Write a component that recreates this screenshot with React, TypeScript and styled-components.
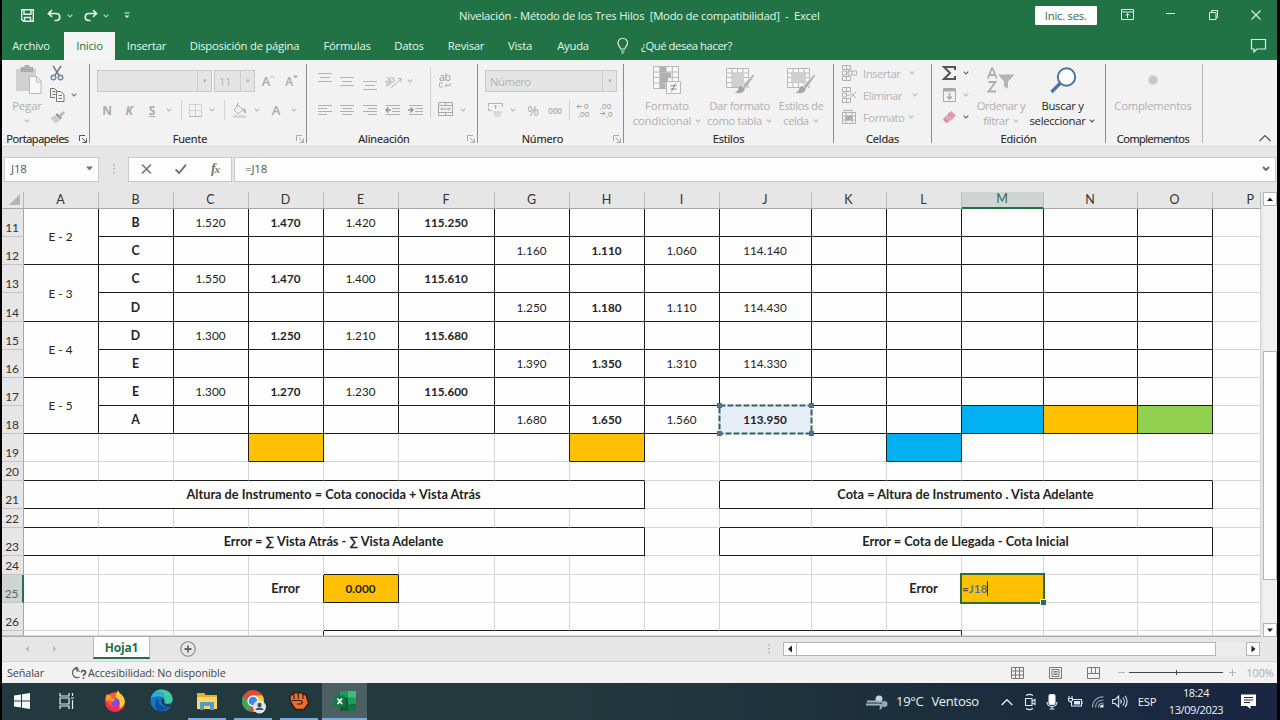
import { FC, ReactNode } from 'react'
import styled, { createGlobalStyle, css } from 'styled-components'

const GlobalStyle = createGlobalStyle`
  * { box-sizing: border-box; }
  body {
    margin: 0;
    background: #000;
    overflow: hidden;
  }
  svg { display: block; flex: none; overflow: visible; }
`

const Screen = styled.div`
  width: 1280px;
  height: 720px;
  padding: 0 3px 0 2px;
  display: flex;
  flex-direction: column;
  background: #000;
  color: #262626;
  font-family: 'Open Sans', 'Noto Sans', sans-serif;
  font-size: 11.3px;
  line-height: 15px;
  letter-spacing: -0.2px;
  white-space: nowrap;
`

/* ---------- shared bits ---------- */

type IconProps = {
  w?: number
  h?: number
  color?: string
  sw?: number
  children: ReactNode
}

const Icon: FC<IconProps> = ({ w = 16, h = 16, color = '#b4b4b4', sw = 1, children }) => (
  <svg width={w} height={h} viewBox={`0 0 ${w} ${h}`} fill='none' stroke={color} strokeWidth={sw}>
    {children}
  </svg>
)

const Chevron: FC<{ color?: string }> = ({ color = '#bcbcbc' }) => (
  <Icon w={6} h={4} color={color} sw={1.1}><path d='M.7 .7 3 3 5.3 .7' /></Icon>
)

// fixed width place for one control, content centered
const Slot = styled.div<{ w: number; ml?: number; drop?: number }>`
  width: ${({ w }) => w}px;
  margin-left: ${({ ml }) => ml ?? 0}px;
  padding-top: ${({ drop }) => Math.max(drop ?? 0, 0)}px;
  padding-bottom: ${({ drop }) => Math.max(-(drop ?? 0), 0)}px;
  flex: none;
  display: flex;
  align-items: center;
  justify-content: center;
`

/* ---------- title bar and tabs ---------- */

const TitleBar = styled.header`
  height: 32px;
  flex: none;
  display: flex;
  align-items: center;
  padding-bottom: 1px;
  background: #217346;
  color: #e2f7ea;
`

const DocTitle = styled.div`
  width: 361px;
  margin-left: 327px;
  letter-spacing: -0.23px;
  white-space: pre;
`

const SignIn = styled.button`
  width: 63px;
  height: 19px;
  margin: 0 0 0 215px;
  padding: 0;
  border: 0;
  border-radius: 1px;
  background: #fff;
  color: #2b6a48;
  font: inherit;
  letter-spacing: -0.25px;
`

const TabBar = styled.nav`
  height: 28px;
  flex: none;
  display: flex;
  background: #217346;
  color: #e2f7ea;
`

const RibbonTab = styled.div<{ w: number; $active?: boolean }>`
  width: ${({ w }) => w}px;
  flex: none;
  display: flex;
  align-items: center;
  justify-content: center;
  padding-bottom: 1px;
  letter-spacing: -0.25px;
  ${({ $active }) => $active && css`
    background: #f3f5f4;
    color: #217346;
  `}
`

const TellMe = styled.div`
  display: flex;
  align-items: center;
  gap: 12px;
  margin-left: 14px;
  padding-bottom: 1px;
  width: 640px;
  letter-spacing: -0.45px;
`

/* ---------- ribbon ---------- */

const Ribbon = styled.section`
  height: 87px;
  flex: none;
  display: flex;
  background: #f2f2f2;
  border-bottom: 1px solid #d8d8d8;
`

const Divider = styled.div<{ light?: boolean }>`
  width: 1px;
  height: 79px;
  margin-top: 4px;
  flex: none;
  background: ${({ light }) => (light ? '#b5b5b5' : '#8c8c8c')};
`

const Group = styled.div<{ w: number }>`
  width: ${({ w }) => w}px;
  flex: none;
  display: grid;
  grid-template-rows: 71px 15px;
`

const GroupBody = styled.div<{ top?: number; column?: boolean }>`
  display: flex;
  flex-direction: ${({ column }) => (column ? 'column' : 'row')};
  padding-top: ${({ top }) => top ?? 2}px;
  color: #b5b5b5;
`

const GroupLabel = styled.div<{ shift?: number; ls?: number }>`
  display: grid;
  grid-template-columns: 12px 1fr 12px;
  align-items: center;
  justify-items: center;
  color: #222;
  font-size: 11px;
  letter-spacing: ${({ ls }) => ls ?? -0.15}px;
  -webkit-text-stroke: 0.15px #222;

  span {
    grid-column: 2;
    margin-left: ${({ shift }) => shift ?? 0}px;
  }
`

const Column = styled.div<{ w: number; ml?: number }>`
  width: ${({ w }) => w}px;
  margin-left: ${({ ml }) => ml ?? 0}px;
  flex: none;
`

const Row = styled.div<{ h?: number }>`
  height: ${({ h }) => h ?? 22}px;
  display: flex;
  align-items: center;
`

const BigButton = styled.div<{ w: number; dark?: boolean; ls?: number }>`
  width: ${({ w }) => w}px;
  flex: none;
  display: grid;
  grid-template-rows: 36px 15px 15px;
  justify-items: center;
  align-items: center;
  color: ${({ dark }) => (dark ? '#262626' : '#b0b0b0')};
  letter-spacing: ${({ ls }) => ls ?? 0}px;

  span {
    display: flex;
    align-items: center;
    gap: 4px;
  }
`

const Select = styled.div<{ w: number }>`
  width: ${({ w }) => w}px;
  height: 22px;
  flex: none;
  display: flex;
  align-items: center;
  padding-left: 4px;
  border: 1px solid #c9c9c9;
  background: #e4e4e4;
  color: #b5b5b5;
  letter-spacing: -0.5px;

  &::after {
    content: '▾';
    width: 13px;
    height: 20px;
    margin-left: auto;
    border-left: 1px solid #cdcdcd;
    font: 7px/20px 'DejaVu Sans', sans-serif;
    text-align: center;
  }
`

const Rule = styled.div<{ h?: number; ml: number }>`
  width: 1px;
  height: ${({ h }) => h ?? 20}px;
  margin-left: ${({ ml }) => ml}px;
  flex: none;
  background: #d4d4d4;
`

const Glyph = styled.span<{ size?: number; $italic?: boolean; $underline?: boolean; weight?: number }>`
  font-size: ${({ size }) => size ?? 12}px;
  font-weight: ${({ weight }) => weight ?? 700};
  font-style: ${({ $italic }) => ($italic ? 'italic' : 'normal')};
  text-decoration: ${({ $underline }) => ($underline ? 'underline' : 'none')};
  color: #ababab;
`

const Launcher: FC<{ color?: string }> = ({ color = '#aaa' }) => (
  <Icon w={8} h={8} color={color}><path d='M.5 6V.5H6M3 3l4 4M7.500 3.500v4h-4' /></Icon>
)

const Lines: FC<{ rows: [number, number][]; arrow?: 'in' | 'out' }> = ({ rows, arrow }) => (
  <Icon w={16} h={rows.length * 3} color='#b0b0b0'>
    {rows.map(([from, to], i) => <path key={i} d={`M${from} ${i * 3 + 1}.5H${to}`} />)}
    {arrow === 'out' && <path d='M6 6H1M3.500 3.500 1 6l2.500 2.500' strokeWidth='1.500' stroke='#999' />}
    {arrow === 'in' && <path d='M0 6h5M2.500 3.500 5 6 2.500 8.500' strokeWidth='1.500' stroke='#999' />}
  </Icon>
)

const TableIcon: FC<{ kind: 'cond' | 'table' | 'cell' }> = ({ kind }) => (
  <Icon w={28} h={30} color='#b8b8b8'>
    <path
      d={kind === 'cond'
        ? 'M.5 1.500h25v22H.5zM.5 7h25M.5 12.500h25M.5 18h25M6.800 1.500v22M13 1.500v22M19.300 1.500v22'
        : 'M.5 3.500h22v19H.5zM.5 8h22M.5 12.500h22M.5 17.500h22M6 3.500v19M11.500 3.500v19M17 3.500v19'}
      fill='#f8f8f8'
    />
    {kind === 'cond' && (
      <>
        <path d='M7 2h6v5H7zM7 7.500h11v5H7zM7 13h8v5H7zM7 18.500h5v5H7z' fill='#b0b0b0' stroke='none' />
        <path d='M13.500 16.500h14v12h-14z' fill='#f6f6f6' />
        <path d='M17.500 20.800h6M17.500 24h6M22.500 18.500l-4 8' stroke='#8a8a8a' />
      </>
    )}
    {kind !== 'cond' && (
      <>
        <path d={kind === 'table' ? 'M6 8h12v14H6z' : 'M4 7h15v11H4z'} fill='#cfcfcf' stroke='none' />
        <path d='M27.500 8.500 16 21l3.500 3L28.500 11z' fill='#b4b4b4' stroke='#f4f4f4' />
        <path d='M15.500 21c-3 .2-3 3-4 4.500-.8 1.200-2 1.500-3 1.700 3.500 2 9 1.500 10.500-3.200z' fill='#a5a5a5' stroke='none' />
      </>
    )}
  </Icon>
)

const CellsIcon: FC<{ kind: 'insert' | 'delete' | 'format' }> = ({ kind }) => (
  <Icon w={16} h={16} color='#b2b2b2'>
    {kind === 'format' ? (
      <>
        <path d='M1.500 3.500h13v11h-13zM1.500 7h13M1.500 11h13M5 3.500v11M11 3.500v11M3 .5v2M3 1.500h8M11 .5v2' />
        <path d='M5 7h6v4H5z' fill='#aaa' />
      </>
    ) : (
      <>
        <path d='M1.500 .5h8v4h-8zM5.500 .5v4M1.500 11.500h8v4h-8zM5.500 11.500v4M1.500 6h4v4h-4z' />
        {kind === 'insert' ? <path d='M7 6h8.500v4H7zM11 6v4M10 3 7 8' /> : <path d='m9 5 6 6M15 5l-6 6M6 8h4' />}
      </>
    )}
  </Icon>
)

const ClipboardGroup: FC = () => (
  <Group w={87}>
    <GroupBody>
      <Column w={42} ml={4}>
        <BigButton w={42} ls={-0.1}>
          <Icon w={24} h={30} color='#b8b8b8'>
            <path d='M1 4h20v22H1z' fill='#d0d0d0' stroke='none' />
            <path d='M6 4.500h11M6 2.500h4V.5h4v2h4v4H6z' fill='#b4b4b4' stroke='#a8a8a8' />
            <path d='M14.500 11.500h7l4.500 5v12H14.500z' fill='#f7f7f7' />
            <path d='M21.500 12v5h5' />
          </Icon>
          <span>Pegar</span>
          <Chevron />
        </BigButton>
      </Column>
      <Column w={36}>
        <Row>
          <Slot w={18}>
            <Icon w={14} h={16} color='#6f7780' sw={1.4}>
              <path d='M3 1l6.500 10M11 1 4.500 11' />
              <circle cx='3.500' cy='12.500' r='2.300' stroke='#6f8ba8' /><circle cx='10.500' cy='12.500' r='2.300' stroke='#6f8ba8' />
            </Icon>
          </Slot>
        </Row>
        <Row>
          <Slot w={18}>
            <Icon w={15} h={14} color='#767676'>
              <path d='M5 9.500H.5v-9h4l3 3M2.500 3.500h3M2.500 6.500h3' />
              <path d='M6.500 3.500h4l3.500 3v7H6.500zM8.500 7.500h3.500M8.500 10.500h3.500' fill='#f8f8f8' />
            </Icon>
          </Slot>
          <Slot w={16}><Chevron color='#777' /></Slot>
        </Row>
        <Row>
          <Slot w={18}>
            <Icon w={15} h={14} color='#aaa'>
              <path d='m9 5 4-4 2 2-4 4z' fill='#bbb' stroke='none' />
              <path d='m7 3 5 5-2 1.500L5.500 5z' fill='#999' stroke='none' />
              <path d='m5 5.500 5 4.500-4 3.500L0 8z' fill='#cbcbcb' stroke='none' />
            </Icon>
          </Slot>
        </Row>
      </Column>
    </GroupBody>
    <GroupLabel shift={-16} ls={-0.45}><span>Portapapeles</span><Launcher color='#555' /></GroupLabel>
  </Group>
)

const FontGroup: FC = () => (
  <Group w={216}>
    <GroupBody top={7} column>
      <Row h={28}>
        <Slot w={7} />
        <Select w={115} />
        <Slot w={2} />
        <Select w={41}>11</Select>
        <Slot w={27}><Glyph size={13} weight={600}>A</Glyph><Icon w={5} h={12}><path d='M.5 3 2.500 1l2 2' /></Icon></Slot>
        <Slot w={19}><Glyph size={12} weight={600}>A</Glyph><Icon w={5} h={12}><path d='M.5 1h4l-2 2z' fill='#aaa' /></Icon></Slot>
      </Row>
      <Row h={30}>
        <Slot w={22} ml={6}><Glyph>N</Glyph></Slot>
        <Slot w={22}><Glyph $italic>K</Glyph></Slot>
        <Slot w={24}><Glyph $underline>S</Glyph></Slot>
        <Slot w={10}><Chevron /></Slot>
        <Rule ml={7} />
        <Slot w={26}>
          <Icon w={13} h={13}><path d='M.5 .5h12v12H.5zM6.500 .5v12M.5 6.500h12' strokeDasharray='1 1' /><path d='M0 12.500h13' /></Icon>
        </Slot>
        <Slot w={10} ml={-1}><Chevron /></Slot>
        <Rule ml={7} />
        <Slot w={29}>
          <Icon w={15} h={15}>
            <path d='m6 2 5 5-5 4-4-4zM5.500 0v4' />
            <path d='M11 6c2 1 2.500 2 2 4' strokeWidth='2' /><path d='M1 13.500h13' stroke='#d8d8d8' strokeWidth='3' />
          </Icon>
        </Slot>
        <Slot w={6}><Chevron /></Slot>
        <Slot w={32}><Glyph size={13} weight={600}>A</Glyph></Slot>
        <Slot w={4}><Chevron /></Slot>
      </Row>
    </GroupBody>
    <GroupLabel shift={-16}><span>Fuente</span><Launcher /></GroupLabel>
  </Group>
)

const AlignGroup: FC = () => (
  <Group w={170}>
    <GroupBody top={7}>
      <Column w={123}>
        <Row h={28}>
          <Slot w={23} ml={6}><Icon w={14} h={18}><path d='M0 1.500h14M2 5.500h10M0 9.500h14' /></Icon></Slot>
          <Slot w={22}><Icon w={14} h={18}><path d='M0 5.500h14M2 9.500h10M0 13.500h14' /></Icon></Slot>
          <Slot w={24}><Icon w={14} h={18}><path d='M0 9.500h14M2 13.500h10M0 17.500h14' /></Icon></Slot>
          <Slot w={24}>
            <Icon w={16} h={15}>
              <text x='-1' y='9' fontSize='10' fill='#a4a4a4' stroke='none' transform='rotate(-38 6 8)' letterSpacing='-0.6'>ab</text>
              <path d='m5 14 10-9M11.500 4.500h3.500V8' />
            </Icon>
          </Slot>
          <Slot w={8}><Chevron /></Slot>
        </Row>
        <Row h={30}>
          <Slot w={23} ml={6}><Lines rows={[[1, 15], [1, 10], [1, 15], [1, 10]]} /></Slot>
          <Slot w={22}><Lines rows={[[1, 15], [3, 13], [1, 15], [3, 13]]} /></Slot>
          <Slot w={24}><Lines rows={[[1, 15], [6, 15], [1, 15], [6, 15]]} /></Slot>
          <Slot w={22}><Lines rows={[[1, 15], [7, 15], [7, 15], [1, 15]]} arrow='out' /></Slot>
          <Slot w={23}><Lines rows={[[1, 15], [7, 15], [7, 15], [1, 15]]} arrow='in' /></Slot>
        </Row>
      </Column>
      <Rule ml={0} h={52} />
      <Column w={46}>
        <Row h={28}>
          <Slot w={28}>
            <Icon w={14} h={16}>
              <text x='1' y='8' fontSize='10.500' fill='#9c9c9c' stroke='none' letterSpacing='-0.3'>ab</text>
              <path d='M5 10H1.500v4H5M12 10v2.500H7M9 11l-2 1.500L9 14' />
            </Icon>
          </Slot>
        </Row>
        <Row h={30}>
          <Slot w={28} drop={-2}>
            <Icon w={15} h={14} color='#a9a9a9'>
              <path d='M.5 .5h14v13H.5zM.5 3.500h14M.5 10.500h14M7.500 .5v3M7.500 10.500v3M2.500 7h10M4.500 5.500 3 7l1.500 1.500M10.500 5.500 12 7l-1.500 1.500' />
            </Icon>
          </Slot>
          <Slot w={8}><Chevron /></Slot>
        </Row>
      </Column>
    </GroupBody>
    <GroupLabel shift={-16}><span>Alineación</span><Launcher /></GroupLabel>
  </Group>
)

const NumberGroup: FC = () => (
  <Group w={145}>
    <GroupBody top={7} column>
      <Row h={28}>
        <Slot w={7} />
        <Select w={132}>Número</Select>
      </Row>
      <Row h={30}>
        <Slot w={22} ml={6} drop={-2}>
          <Icon w={15} h={15}>
            <path d='M3 1.500H.5V5M12 1.500h2.500V5M.5 6v2.500H4M3 1.500h9M7.500 3v4M6 4.500h3' /><path d='M5 10h9M6 12h7M7 14h5' stroke='#d0d0d0' strokeWidth='1.500' />
          </Icon>
        </Slot>
        <Slot w={14}><Chevron /></Slot>
        <Slot w={26}><Glyph size={14} weight={400}>%</Glyph></Slot>
        <Slot w={18}><Glyph size={8.500} weight={600}>000</Glyph></Slot>
        <Rule ml={5} />
        <Slot w={27}>
          <Icon w={15} h={14} color='#a0a0a0'>
            <path d='M1 3.500h5M3 1.500l-2 2 2 2' />
            <text x='8' y='6' fontSize='8' fill='#949494' stroke='none'>0</text>
            <text x='2' y='14' fontSize='8' fill='#949494' stroke='none' letterSpacing='0'>,00</text>
          </Icon>
        </Slot>
        <Slot w={19}>
          <Icon w={15} h={14} color='#a0a0a0'>
            <text x='1' y='6' fontSize='8' fill='#949494' stroke='none' letterSpacing='0'>,00</text>
            <path d='M1 10.500h5M4 8.500l2 2-2 2' />
            <text x='7' y='14' fontSize='8' fill='#949494' stroke='none' letterSpacing='0'>,0</text>
          </Icon>
        </Slot>
      </Row>
    </GroupBody>
    <GroupLabel shift={-16}><span>Número</span><Launcher /></GroupLabel>
  </Group>
)

const StylesGroup: FC = () => (
  <Group w={209}>
    <GroupBody>
      <Slot w={7} />
      <BigButton w={72} ls={-0.12}>
        <TableIcon kind='cond' />
        <span>Formato</span>
        <span>condicional <Chevron /></span>
      </BigButton>
      <BigButton w={73} ls={-0.38}>
        <TableIcon kind='table' />
        <span>Dar formato</span>
        <span>como tabla <Chevron /></span>
      </BigButton>
      <BigButton w={50} ls={-0.5}>
        <TableIcon kind='cell' />
        <span>Estilos de</span>
        <span>celda <Chevron /></span>
      </BigButton>
    </GroupBody>
    <GroupLabel><span>Estilos</span></GroupLabel>
  </Group>
)

const CellsRow = styled(Row)`
  letter-spacing: -0.5px;
`

const CellsGroup: FC = () => (
  <Group w={97}>
    <GroupBody top={2} column>
      <CellsRow><Slot w={28} ml={1}><CellsIcon kind='insert' /></Slot><Column w={46}>Insertar</Column><Chevron /></CellsRow>
      <CellsRow><Slot w={28} ml={1}><CellsIcon kind='delete' /></Slot><Column w={49}>Eliminar</Column><Chevron /></CellsRow>
      <CellsRow><Slot w={28} ml={1}><CellsIcon kind='format' /></Slot><Column w={45}>Formato</Column><Chevron /></CellsRow>
    </GroupBody>
    <GroupLabel><span>Celdas</span></GroupLabel>
  </Group>
)

const EditGroup: FC = () => (
  <Group w={173}>
    <GroupBody>
      <Column w={38} ml={3}>
        <Row>
          <Slot w={28}><Icon w={14} h={14} color='#555' sw={2}><path d='M13 4V1H2l6 6-6 6h11v-3' /></Icon></Slot>
          <Chevron color='#666' />
        </Row>
        <Row>
          <Slot w={28}>
            <Icon w={13} h={14} color='#aaa'><path d='M.5 .5h12v13H.5z' /><path d='M1 2h11' strokeWidth='3' /><path d='M6.500 5v6M4 8.500 6.500 11 9 8.500' strokeWidth='1.500' /></Icon>
          </Slot>
          <Chevron />
        </Row>
        <Row>
          <Slot w={28}>
            <Icon w={13} h={12}>
              <path d='m8 0 5 4.500L8.500 9 3.500 4z' fill='#e596ae' stroke='none' /><path d='M3 4.500 8 9l-3 2.500H2.500L0 8.500z' fill='#d88aa3' stroke='none' />
              <path d='m2 6 4.500 4.500' stroke='#f6dde4' />
            </Icon>
          </Slot>
          <Chevron color='#666' />
        </Row>
      </Column>
      <BigButton w={56} ls={-0.5}>
        <Icon w={28} h={28} color='#adadad'>
          <path d='m.8 12.500 4-10h.8l4 10M2.300 9H8M1.500 16H8.500L1.500 25.500h7.500' strokeWidth='1.800' />
          <path d='M11 8.500h16.500L21 15.500v7l-4-2v-5z' fill='#b4b4b4' stroke='none' />
        </Icon>
        <span>Ordenar y</span>
        <span>filtrar <Chevron /></span>
      </BigButton>
      <BigButton w={67} ls={-0.3} dark>
        <Icon w={26} h={27} color='#4673a8' sw={2}>
          <circle cx='16.500' cy='10' r='8.700' fill='#fbfdff' /><path d='M10 16.500 1.500 25' strokeWidth='3.200' />
        </Icon>
        <span>Buscar y</span>
        <span>seleccionar <Chevron color='#555' /></span>
      </BigButton>
    </GroupBody>
    <GroupLabel><span>Edición</span></GroupLabel>
  </Group>
)

const tabs: { label: string; w: number }[] = [
  { label: 'Insertar', w: 63 },
  { label: 'Disposición de página', w: 133 },
  { label: 'Fórmulas', w: 72 },
  { label: 'Datos', w: 52 },
  { label: 'Revisar', w: 62 },
  { label: 'Vista', w: 46 },
  { label: 'Ayuda', w: 60 },
]

const TopArea: FC = () => (
  <>
    <TitleBar>
      <Slot w={14} ml={18}>
        <Icon w={13} h={13} color='#e2f7ea' sw={1.4}><path d='M.7 .7h11.600v11.600H2.500L.7 10.500zM3 .7v4.500h7V.7M3.500 12V8.500h6V12' /></Icon>
      </Slot>
      <Slot w={16} ml={12}>
        <Icon w={14} h={13} color='#e2f7ea' sw={1.7}><path d='M5 1 1.500 4.500 5 8M2 4.500h7c5 0 5 7 0 7H7.500' /></Icon>
      </Slot>
      <Slot w={14} ml={1}><Chevron color='#b5dcc5' /></Slot>
      <Slot w={16} ml={6}>
        <Icon w={14} h={13} color='#e2f7ea' sw={1.7}><path d='M9 1l3.500 3.500L9 8M12 4.500H5c-5 0-5 7 0 7h1.500' /></Icon>
      </Slot>
      <Slot w={14}><Chevron color='#b5dcc5' /></Slot>
      <Slot w={10} ml={9}><Icon w={6} h={7} color='#e2f7ea'><path d='M.5 1h5' /><path d='M.5 3.500h5L3 6z' fill='#e2f7ea' stroke='none' /></Icon></Slot>
      <DocTitle>{'Nivelación - Método de los Tres Hilos  [Modo de compatibilidad]  -  Excel'}</DocTitle>
      <SignIn>Inic. ses.</SignIn>
      <Slot w={44} ml={8} drop={-2}>
        <Icon w={13} h={11} color='#e2f7ea'><path d='M.5 .5h12v10H.5zM.5 3h12M6.500 9V4.500M4.500 6.500l2-2 2 2' /></Icon>
      </Slot>
      <Slot w={42}><Icon w={9} h={6} color='#e2f7ea'><path d='M0 .5h9' /></Icon></Slot>
      <Slot w={44} drop={-1}><Icon w={9} h={11} color='#e2f7ea'><path d='M.5 2.500h6.500v7H.5zM2.500 2V.5h6V7.500H7' /></Icon></Slot>
      <Slot w={42} drop={-2}><Icon w={10} h={10} color='#e2f7ea' sw={1.1}><path d='m.5 .5 9 9M9.500 .5l-9 9' /></Icon></Slot>
    </TitleBar>
    <TabBar>
      <RibbonTab w={58}>Archivo</RibbonTab>
      <Slot w={4} />
      <RibbonTab w={51} $active>Inicio</RibbonTab>
      {tabs.map((t) => <RibbonTab key={t.label} w={t.w}>{t.label}</RibbonTab>)}
      <TellMe>
        <Icon w={12} h={16} color='#d8f2e2' sw={1.2}>
          <path d='M3.800 11C3.500 9 1 8 1 5a4.700 4.700 0 0 1 9.500 0c0 3-2.500 4-2.800 6zM4 13h3.500M4.500 15h2.500' />
        </Icon>
        ¿Qué desea hacer?
      </TellMe>
      <Slot w={14} ml={-6} drop={-1}><Icon w={15} h={14} color='#d8f2e2' sw={1.2}><path d='M.5 .5h14v9.500H6L3 13v-3H.5z' /></Icon></Slot>
    </TabBar>
    <Ribbon>
      <ClipboardGroup /><Divider />
      <FontGroup /><Divider />
      <AlignGroup /><Divider />
      <NumberGroup /><Divider />
      <StylesGroup /><Divider />
      <CellsGroup /><Divider />
      <EditGroup /><Divider />
      <Group w={96}>
        <GroupBody>
          <BigButton w={94} ls={-0.25}>
            <Icon w={12} h={12}><circle cx='6' cy='6' r='5' fill='#d2d2d2' stroke='none' /><circle cx='6' cy='6' r='3' fill='#c2c2c2' stroke='none' /></Icon>
            <span>Complementos</span>
          </BigButton>
        </GroupBody>
        <GroupLabel ls={-0.5} shift={-2}><span>Complementos</span></GroupLabel>
      </Group>
      <Divider light />
      <Slot w={14} ml={55} drop={70}><Icon w={12} h={8} color='#555' sw={1.2}><path d='m.5 7 5.500-5.500L11.500 7' /></Icon></Slot>
    </Ribbon>
  </>
)

/* ---------- formula bar ---------- */

const FormulaBar = styled.div`
  height: 45px;
  flex: none;
  display: flex;
  align-items: center;
  padding: 0 1px 1px 2px;
  background: #e6e6e6;
  color: #555;
  font-size: 11.5px;
`

const FormulaBox = styled.div<{ w?: number }>`
  ${({ w }) => (w ? `width: ${w}px; flex: none;` : 'flex: 1;')}
  height: 25px;
  display: flex;
  align-items: center;
  justify-content: space-between;
  padding: 0 5px 1px 6px;
  border: 1px solid #c9c9c9;
  background: #fdfdfd;
`

const Formula = styled.span`
  padding-left: 4px;
`

const Fx = styled.i`
  font: italic bold 14px 'Liberation Serif', serif;
  letter-spacing: -1px;
  color: #777;

  small { font-size: 11px; }
`

/* ---------- worksheet ---------- */

const COLS = [75, 75, 75, 75, 75, 96, 75, 75, 75, 92, 75, 75, 82, 94, 75, 48]
const ROWS = [28, 28, 28, 29, 28, 28, 28, 28, 28, 19, 28, 19, 28, 19, 28, 28, 5]
const LETTERS = 'ABCDEFGHIJKLMNOP'
const FIRST_ROW = 11

const SheetArea = styled.main`
  height: 445px;
  flex: none;
  display: flex;
  background: #e6e6e6;
  color: #222;
  font-family: Lato, 'Open Sans', sans-serif;
  font-size: 11.7px;
  letter-spacing: 0;
`

const Grid = styled.div`
  width: 1259px;
  display: grid;
  grid-template-columns: 22px ${COLS.map((c) => `${c}px`).join(' ')};
  grid-template-rows: 17px ${ROWS.map((r) => `${r}px`).join(' ')};
  border-bottom: 1px solid #ababab;
`

const Corner = styled.div`
  border-right: 1px solid #b4b4b4;
  border-bottom: 1px solid #a6a6a6;
  display: flex;
  justify-content: flex-end;
  align-items: flex-end;
  padding: 0 3px 3px 0;
`

const ColHead = styled.div<{ $on?: boolean; $last?: boolean }>`
  display: flex;
  align-items: center;
  justify-content: ${({ $last }) => ($last ? 'flex-end' : 'center')};
  padding: 0 ${({ $last }) => ($last ? 6 : 1)}px 1px 0;
  border-right: 1px solid #bdbdbd;
  border-bottom: ${({ $on }) => ($on ? '2px solid #217346' : '1px solid #a6a6a6')};
  background: ${({ $on }) => ($on ? '#d0d4d2' : '#e6e6e6')};
  color: ${({ $on }) => ($on ? '#2e6b4b' : '#333')};
  font-size: 12.5px;
  line-height: 14px;
`

const RowHead = styled.div<{ $on?: boolean }>`
  grid-column: 1;
  display: flex;
  align-items: flex-end;
  justify-content: center;
  overflow: hidden;
  padding-right: 1px;
  border-right: ${({ $on }) => ($on ? '2px solid #217346' : '1px solid #a6a6a6')};
  border-bottom: 1px solid #c4c4c4;
  background: ${({ $on }) => ($on ? '#d0d4d2' : '#e6e6e6')};
  color: ${({ $on }) => ($on ? '#4e6e5d' : '#333')};
  font-size: 12px;
  letter-spacing: -0.2px;
  line-height: 16px;
`

type CellStyle = {
  c: number
  r: number
  cs?: number
  rs?: number
  size: number
  $bold?: boolean
  fill?: string
  $right?: boolean
  $bottom?: boolean
}

const Cell = styled.div<CellStyle>`
  position: relative;
  grid-column: ${({ c, cs }) => `${c + 2} / span ${cs ?? 1}`};
  grid-row: ${({ r, rs }) => `${r + 2} / span ${rs ?? 1}`};
  display: flex;
  align-items: center;
  justify-content: center;
  padding-right: 1px;
  border-right: 1px solid ${({ $right }) => ($right ? '#1c1c1c' : '#d6d6d6')};
  border-bottom: 1px solid ${({ $bottom }) => ($bottom ? '#1c1c1c' : '#d6d6d6')};
  background: ${({ fill }) => fill ?? '#fefefe'};
  font-size: ${({ size }) => size}px;
  font-weight: ${({ $bold }) => ($bold ? 700 : 400)};
`

// marching ants round the referenced cell
const RefFrame = styled.svg`
  position: absolute;
  z-index: 1;
  left: -2px;
  top: -2px;
`

const EditFrame = styled.div`
  position: absolute;
  z-index: 1;
  inset: -2px -2px -2px -2px;
  display: flex;
  align-items: center;
  border: 2px solid #2c6e2f;
  color: #4f74a8;
  font-weight: 700;

  b { color: #5d5a3a; }

  &::before {
    content: '';
    order: 1;
    width: 1px;
    height: 15px;
    background: #333;
  }

  &::after {
    content: '';
    position: absolute;
    right: -3px;
    bottom: -3px;
    width: 5px;
    height: 5px;
    border: 1px solid #fff;
    border-width: 1px 0 0 1px;
    background: #217346;
  }
`

const YELLOW = '#ffc000'
const BLUE = '#00b0f0'
const GREEN = '#92d050'

const values: Record<string, string> = {
  B11: 'B', C11: '1.520', D11: '1.470', E11: '1.420', F11: '115.250',
  B12: 'C', G12: '1.160', H12: '1.110', I12: '1.060', J12: '114.140',
  B13: 'C', C13: '1.550', D13: '1.470', E13: '1.400', F13: '115.610',
  B14: 'D', G14: '1.250', H14: '1.180', I14: '1.110', J14: '114.430',
  B15: 'D', C15: '1.300', D15: '1.250', E15: '1.210', F15: '115.680',
  B16: 'E', G16: '1.390', H16: '1.350', I16: '1.310', J16: '114.330',
  B17: 'E', C17: '1.300', D17: '1.270', E17: '1.230', F17: '115.600',
  B18: 'A', G18: '1.680', H18: '1.650', I18: '1.560', J18: '113.950',
  D25: 'Error', E25: '0.000', L25: 'Error',
}

const merged: Record<string, { text: string; cs?: number; rs?: number }> = {
  A11: { text: 'E - 2', rs: 2 },
  A13: { text: 'E - 3', rs: 2 },
  A15: { text: 'E - 4', rs: 2 },
  A17: { text: 'E - 5', rs: 2 },
  A21: { text: 'Altura de Instrumento = Cota conocida + Vista Atrás', cs: 8 },
  J21: { text: 'Cota = Altura de Instrumento . Vista Adelante', cs: 6 },
  A23: { text: 'Error = ∑ Vista Atrás - ∑ Vista Adelante', cs: 8 },
  J23: { text: 'Error = Cota de Llegada - Cota Inicial', cs: 6 },
  E27: { text: '', cs: 8 },
}

const fills: Record<string, string> = {
  J18: '#e6eef8', M18: BLUE, N18: YELLOW, O18: GREEN,
  D19: YELLOW, H19: YELLOW, L19: BLUE, E25: YELLOW, M25: YELLOW,
}

// black lines that do not come from the main table
const rightLines = ['C19', 'D19', 'G19', 'H19', 'K19', 'L19', 'I21', 'I23', 'D25', 'E25', 'D27']
const bottomLines = ['D19', 'H19', 'L19', 'E24', 'E25']

const inRange = (letter: string, from: string, to: string) => letter >= from && letter <= to

const textSize = (text = '') => {
  if (text.includes('=') || text === 'Error') return 12.75
  return text.length === 1 ? 12.3 : 11.7
}

const renderCells = () => {
  const cells: ReactNode[] = []
  const taken = new Set<string>()

  ROWS.forEach((_, r) => {
    const row = FIRST_ROW + r
    LETTERS.split('').forEach((letter, c) => {
      const ref = `${letter}${row}`
      if (taken.has(ref)) return
      const m = merged[ref]
      if (m) {
        for (let i = 0; i < (m.cs ?? 1); i++) {
          for (let j = 0; j < (m.rs ?? 1); j++) taken.add(`${LETTERS[c + i]}${row + j}`)
        }
      }
      const inTable = row <= 18 && letter !== 'P'
      const boxEdge = (row >= 20 && row <= 23) && (inRange(letter, 'A', 'H') || inRange(letter, 'J', 'O'))
      const bold = row > 18 || 'BDFH'.includes(letter) || ref === 'J18'
      const text = m?.text ?? values[ref]
      cells.push(
        <Cell
          key={ref}
          c={c}
          r={r}
          cs={m?.cs}
          rs={m?.rs}
          size={textSize(text)}
          fill={fills[ref]}
          $bold={bold}
          $right={inTable || !!m || rightLines.includes(ref)}
          $bottom={inTable || boxEdge || bottomLines.includes(ref) || (row === 26 && inRange(letter, 'E', 'L'))}
        >
          {text}
          {ref === 'J18' && (
            <RefFrame width='95' height='31' viewBox='0 0 95 31' fill='none'>
              <path d='M1.500 1.500h92v28h-92z' stroke='#e9f2ee' strokeWidth='2' />
              <path d='M1.500 1.500h92v28h-92z' stroke='#2f6464' strokeWidth='2' strokeDasharray='6 2' />
              <path d='M-1-1h5v5h-5zM91-1h5v5h-5zM-1 27h5v5h-5zM91 27h5v5h-5z' fill='#4a6fa5' />
            </RefFrame>
          )}
          {ref === 'M25' && <EditFrame><b>=</b>J18</EditFrame>}
        </Cell>
      )
    })
  })
  return cells
}

const VScroll = styled.div`
  width: 14px;
  margin-left: 2px;
  display: flex;
  flex-direction: column;
  background: #f0f0f0;
`

const ScrollButton = styled.div`
  width: 14px;
  height: 14px;
  flex: none;
  display: flex;
  align-items: center;
  justify-content: center;
  border: 1px solid #b4b4b4;
  background: #fff;
`

const VThumb = styled.div`
  height: 229px;
  margin: 145px 0 43px;
  flex: none;
  border: 1px solid #b4b4b4;
  background: #fff;
`

const Arrow: FC<{ d: string }> = ({ d }) => (
  <Icon w={8} h={8}><path d={d} fill='#222' stroke='none' /></Icon>
)

/* ---------- sheet tabs and status bar ---------- */

const SheetTabs = styled.div`
  height: 25px;
  flex: none;
  display: flex;
  background: #e6e6e6;
  border-bottom: 1px solid #d2d2d2;
`

const SheetTab = styled.div`
  width: 57px;
  height: 22px;
  margin-left: 27px;
  flex: none;
  border: solid #b8b8b8;
  border-width: 0 1px;
  border-bottom: 2px solid #217346;
  background: #fff;
  color: #217346;
  font-size: 12px;
  font-weight: 700;
  line-height: 22px;
  text-align: center;
`

const HScroll = styled.div`
  width: 477px;
  height: 14px;
  margin: 5px 0 0 9px;
  flex: none;
  display: flex;
  background: #ececec;
`

const HThumb = styled.div`
  width: 420px;
  height: 14px;
  margin: 0 30px 0 -1px;
  border: 1px solid #b4b4b4;
  background: #fff;
`

const StatusBar = styled.footer`
  height: 21px;
  flex: none;
  display: flex;
  align-items: center;
  padding-left: 5px;
  background: #f2f2f2;
  color: #444;
  font-size: 10.8px;
  letter-spacing: -0.1px;
`

const ZoomTrack = styled.div`
  width: 94px;
  height: 1px;
  margin: 0 5px 0 4px;
  display: flex;
  align-items: center;
  justify-content: center;
  background: #444;

  &::after {
    content: '';
    width: 1px;
    height: 5px;
    background: #444;
  }
`

/* ---------- windows taskbar ---------- */

const Taskbar = styled.div`
  height: 37px;
  flex: none;
  display: flex;
  background: linear-gradient(90deg, #22393f 0%, #22393e 45%, #1c2f3c 70%, #1a2642 100%);
  color: #eef2f4;
`

const TaskButton = styled.div<{ w: number; $open?: boolean; $active?: boolean }>`
  width: ${({ w }) => w}px;
  flex: none;
  display: flex;
  align-items: center;
  justify-content: center;
  background: ${({ $active }) => ($active ? '#4c6064' : 'transparent')};
  border-bottom: ${({ $open }) => ($open ? '2px solid #76aee0' : '2px solid transparent')};
`

const Weather = styled.div`
  display: flex;
  align-items: center;
  gap: 8px;
  width: 129px;
  margin-left: 499px;
  font-size: 13px;
  letter-spacing: -0.3px;
`

const Clock = styled.div`
  width: 66px;
  flex: none;
  display: flex;
  flex-direction: column;
  justify-content: center;
  align-items: center;
  padding-bottom: 1px;
  font-size: 11px;
  line-height: 17px;
  letter-spacing: -0.4px;
`

const TaskbarArea: FC = () => (
  <Taskbar>
    <TaskButton w={40}>
      <Icon w={16} h={16}><path d='M0 2.500 7 1.500v6H0zM8 1.300 16 0v7.500H8zM0 8.500h7v6l-7-1zM8 8.500h8V16l-8-1.300z' fill='#f4f8fa' stroke='none' /></Icon>
    </TaskButton>
    <TaskButton w={50}>
      <Icon w={16} h={16} color='#e8eef0' sw={1.2}><path d='M1 0v3h9V0M1 16v-3h9v3M1 5h9v6H1zM13.500 0v3M13.500 7v9M12 5h3' /></Icon>
    </TaskButton>
    <TaskButton w={46}>
      <Icon w={22} h={22}>
        <circle cx='11' cy='12' r='9.800' fill='#ff5a2c' stroke='none' />
        <path d='M1.500 9C1 18 7 22 12 21.800c5.500-.3 9.500-4.800 9-10.800C18 17 5 21 1.500 9z' fill='#f5284f' stroke='none' />
        <path d='M14 0c0 3 6.500 5 6.800 11 .2 5-4 7.500-6 7.500 3-4-1-10-3.500-11.500C12 4 13 1.500 14 0z' fill='#ffc93a' stroke='none' />
        <path d='M3 4c2 1 3 2 5 2l-4 5-2.500-1C1.500 7 2 5.500 3 4z' fill='#ff9a2e' stroke='none' />
        <circle cx='11.500' cy='12.500' r='4.200' fill='#8b45d8' stroke='none' />
        <path d='M5 9c3-1.500 5 0 6.500 1-2 0-2 1.500-3.500 2z' fill='#ffa436' stroke='none' />
      </Icon>
    </TaskButton>
    <TaskButton w={46}>
      <Icon w={23} h={23}>
        <circle cx='11.500' cy='11.500' r='11' fill='#1677c9' stroke='none' />
        <path d='M1 9C3 2 9 0 12 .5c8 .3 11.500 7 10.500 11-1 3.500-6 4-8.500 2.500 2-2 1-6-3-6.500C7 7 3 7.500 1 9z' fill='#43c9a0' stroke='none' />
        <path d='M1 9c1-4.500 4.500-6.500 7-6.500 4 0 7 3 7 6.500-4-4-10-3-14 0z' fill='#2ba9dc' stroke='none' />
        <path d='M9 9c-1.500 5 2 10 10 8.500-3 4-8 5.500-11 4.500C4 19 4 11 9 9z' fill='#124f9c' stroke='none' />
        <path d='M11.500 9.500c2.500 0 3 2.200 2.500 4 2 2.500 6 2 8.500 .5-.5 1.500-1.500 3-2.500 3.500-5 1-10-2.500-8.500-8z' fill='#22393f' stroke='none' />
      </Icon>
    </TaskButton>
    <Slot w={4} />
    <TaskButton w={38} $open>
      <Icon w={20} h={18}>
        <path d='M0 1h7l2 2h11v14H0z' fill='#e8ad33' stroke='none' />
        <path d='M0 5h20v12H0z' fill='#fbd667' stroke='none' />
        <path d='M3 18v-8h14v8h-4v-4H7v4z' fill='#4f9bd0' stroke='none' />
      </Icon>
    </TaskButton>
    <Slot w={8} />
    <TaskButton w={38} $open>
      <Icon w={22} h={22}>
        <circle cx='11' cy='11' r='11' fill='#e04a3a' stroke='none' />
        <path d='M1.500 5.500 9 17l-2 4.300A11 11 0 0 1 1.500 5.500z' fill='#3ba757' stroke='none' />
        <path d='M11 5.500h9.500A11 11 0 0 1 11 22l5-9z' fill='#f9c933' stroke='none' />
        <circle cx='11' cy='11' r='5' fill='#4086f0' stroke='#fff' strokeWidth='1.300' />
        <circle cx='17.500' cy='17' r='6.500' fill='#dfe7ec' stroke='none' />
        <circle cx='17.500' cy='15' r='2.200' fill='#44525c' stroke='none' /><path d='M13.500 20c0-3.500 8-3.500 8 0z' fill='#44525c' stroke='none' />
      </Icon>
    </TaskButton>
    <Slot w={8} />
    <TaskButton w={38} $open>
      <Icon w={20} h={20} color='#3a1710'>
        <path d='M1 7c0-3 2-4 3.500-3.500C5 1.500 8 1 9 2.500 10.500 1 13.500 1.500 14 3.500c2.500-.5 4 1 4 4l1.500 3.500c0 3-3 4-4 7.500h-9C5.500 15 1 14 1 7z' fill='#e8702d' strokeWidth='1.300' />
        <path d='M5 4v4M9.300 3v5M14 4v4M3 9.500h8c3 0 3 3.500 0 3.500H8' strokeWidth='1.100' />
      </Icon>
    </TaskButton>
    <Slot w={4} />
    <TaskButton w={45} $open $active>
      <Icon w={22} h={20}>
        <path d='M6 0h16v20H6z' fill='#1f9a5f' stroke='none' />
        <path d='M14 0h8v6.500h-8z' fill='#38bf7c' stroke='none' /><path d='M6 6.500h8V20H6z' fill='#185c37' stroke='none' /><path d='M14 13h8v7h-8z' fill='#12753f' stroke='none' />
        <path d='M0 4.500h11v11H0z' fill='#107c41' stroke='none' />
        <path d='m3.500 7.500 4.500 5.500M8 7.500 3.500 13' stroke='#fff' strokeWidth='1.600' />
      </Icon>
    </TaskButton>
    <Weather>
      <Icon w={22} h={16} color='#9fb3c4' sw={2}>
        <circle cx='13' cy='5' r='3.500' fill='#c4d4e2' stroke='none' /><circle cx='18.500' cy='10' r='3' fill='#92a9bc' stroke='none' />
        <path d='M1 7.500h15M0 10.500h13c3 0 3 4 .5 4' />
      </Icon>
      <span>19°C</span>
      <span>Ventoso</span>
    </Weather>
    <Slot w={24}><Icon w={12} h={8} color='#e8eef4' sw={1.3}><path d='m.7 7 5.300-5.300L11.300 7' /></Icon></Slot>
    <Slot w={22}>
      <Icon w={12} h={16} color='#dfe6ee' sw={1.1}><path d='M1.500 4.500h6.500v7H1.500zM8.500 7 11 5.500v5L8.500 9M2 1.500c2-1.300 5-1.300 7 0M2 14.500c2 1.300 5 1.300 7 0' /></Icon>
    </Slot>
    <Slot w={22}>
      <Icon w={12} h={16} color='#dfe6ee' sw={1.2}><rect x='3' y='.5' width='6' height='10' rx='1.500' fill='#fff' /><path d='M1 8c0 6 10 6 10 0M6 12.500V15M3.500 15h5' /></Icon>
    </Slot>
    <Slot w={24}>
      <Icon w={15} h={11} color='#dfe6ee' sw={1.1}><path d='M5 3.500h8.500v6.500H3.500V6M14 5.500v2.500M1 0v2M4 0v2M.5 2.500h4v2l-2 1.500-2-1.500z' /><path d='M6 5h6v3.500H6z' fill='#dfe6ee' stroke='none' /></Icon>
    </Slot>
    <Slot w={22}>
      <Icon w={12} h={12} color='#9da9bc' sw={1.1}><path d='M.5 11.500C.5 5 5 .7 11.500.7M3.500 11.500c0-4.500 3-7.500 8-7.500M6.500 11.500c0-3 2-4.500 5-4.500' /><path d='M8 11.500c0-2 1-3 3.500-3v3z' fill='#f0f4fa' stroke='none' /></Icon>
    </Slot>
    <Slot w={22}>
      <Icon w={16} h={13} color='#dfe6ee' sw={1.1}><path d='M.7 4.500h2.500l3.500-3.500v11L3.200 8.500H.7zM8.500 4.500c1 1.200 1 2.800 0 4M10.800 2.500c2 2.300 2 5.700 0 8M13 .8c2.800 3 2.800 8.400 0 11.400' /></Icon>
    </Slot>
    <Slot w={32}>ESP</Slot>
    <Clock><span>18:24</span><span>13/09/2023</span></Clock>
    <Slot w={34} ml={2}>
      <Icon w={15} h={15}><path d='M0 .5h15V12H9.500v3l-3.500-3H0z' fill='#fff' stroke='none' /><path d='M3 3.500h9M3 6h9M3 8.500h6' stroke='#1b2a44' /></Icon>
    </Slot>
  </Taskbar>
)

const dots = <Icon w={2} h={11} color='#aaa' sw={1.5}><path d='M1 0v11' strokeDasharray='1.500 2.500' /></Icon>

export default function App() {
  return (
    <Screen>
      <GlobalStyle />
      <TopArea />
      <FormulaBar>
        <FormulaBox w={95}>J18<Icon w={7} h={5}><path d='M0 .5h7L3.500 4.500z' fill='#777' stroke='none' /></Icon></FormulaBox>
        <Slot w={29}>{dots}</Slot>
        <FormulaBox w={104}>
          <Slot w={22}><Icon w={11} h={10} color='#777' sw={1.6}><path d='m1 .5 9 9M10 .5l-9 9' /></Icon></Slot>
          <Slot w={22}><Icon w={12} h={10} color='#777' sw={2}><path d='m.7 5.500 3.300 3.500L11 .7' /></Icon></Slot>
          <Slot w={22}><Fx>f<small>x</small></Fx></Slot>
        </FormulaBox>
        <Slot w={2} />
        <FormulaBox><Formula>=J18</Formula><Icon w={8} h={6} color='#666' sw={1.8}><path d='m1 1 3 3 3-3' /></Icon></FormulaBox>
      </FormulaBar>
      <SheetArea>
        <Grid>
          <Corner><Icon w={11} h={11}><path d='M11 0v11H0z' fill='#b4b4b4' stroke='none' /></Icon></Corner>
          {LETTERS.split('').map((l) => <ColHead key={l} $on={l === 'M'} $last={l === 'P'}>{l}</ColHead>)}
          {ROWS.map((_, i) => (
            <RowHead key={i} $on={i === 14} style={{ gridRow: i + 2 }}>{i < 16 ? FIRST_ROW + i : ''}</RowHead>
          ))}
          {renderCells()}
        </Grid>
        <VScroll>
          <ScrollButton><Arrow d='M1 6h6L4 2.500z' /></ScrollButton>
          <VThumb />
          <ScrollButton><Arrow d='M1 2.500h6L4 6z' /></ScrollButton>
        </VScroll>
      </SheetArea>
      <SheetTabs>
        <Slot w={10} ml={20}><Icon w={5} h={6}><path d='M4 0v6L.5 3z' fill='#bbb' stroke='none' /></Icon></Slot>
        <Slot w={10} ml={17}><Icon w={5} h={6}><path d='M1 0v6l3.500-3z' fill='#bbb' stroke='none' /></Icon></Slot>
        <Slot w={7} />
        <SheetTab>Hoja1</SheetTab>
        <Slot w={16} ml={30}>
          <Icon w={16} h={16} color='#888' sw={1.1}><circle cx='8' cy='8' r='7.200' /><path d='M4.500 8h7M8 4.500v7' stroke='#666' strokeWidth='1.800' /></Icon>
        </Slot>
        <Slot w={10} ml={568}>{dots}</Slot>
        <HScroll>
          <ScrollButton><Arrow d='M6 .5v7L2 4z' /></ScrollButton>
          <HThumb />
          <ScrollButton><Arrow d='M2.500 .5v7L6.500 4z' /></ScrollButton>
        </HScroll>
      </SheetTabs>
      <StatusBar>
        <Column w={64}>Señalar</Column>
        <Icon w={16} h={14} color='#555' sw={1.2}>
          <path d='M5.500 1.500C1 3 .5 8 3 10.500c1.500 1.300 3.500 1.500 5.500.5M6 1v4h3M4 3h4' />
          <path d='M10.500 6.500c0-3 4.500-2.500 4 .3-.3 1.500-2 1.300-2 3.200M12.500 11.500V13' strokeWidth='1.700' />
        </Icon>
        <Column w={921} ml={1}>Accesibilidad: No disponible</Column>
        <Slot w={16}><Icon w={13} h={12} color='#777'><path d='M.5 .5h12v11H.5zM.5 4h12M.5 8h12M4.500 .5v11M8.500 .5v11' /></Icon></Slot>
        <Slot w={16} ml={22}><Icon w={13} h={12} color='#777'><path d='M.5 .5h12v11H.5zM3 2.500h7v7H3zM4.500 4.500h4M4.500 6h4M4.500 7.500h4' /></Icon></Slot>
        <Slot w={16} ml={22}><Icon w={13} h={12} color='#777'><path d='M.5 .5h12v11H.5zM4.500 .5v6h4v-6M.5 6.500h4M8.500 6.500h4' /></Icon></Slot>
        <Slot w={8} ml={16}><Icon w={7} h={1}><path d='M0 .5h7' /></Icon></Slot>
        <ZoomTrack />
        <Slot w={8}><Icon w={7} h={7}><path d='M0 3.500h7M3.500 0v7' /></Icon></Slot>
        <Slot w={26} ml={11}><Glyph size={10.8} weight={400}>100%</Glyph></Slot>
      </StatusBar>
      <TaskbarArea />
    </Screen>
  )
}
